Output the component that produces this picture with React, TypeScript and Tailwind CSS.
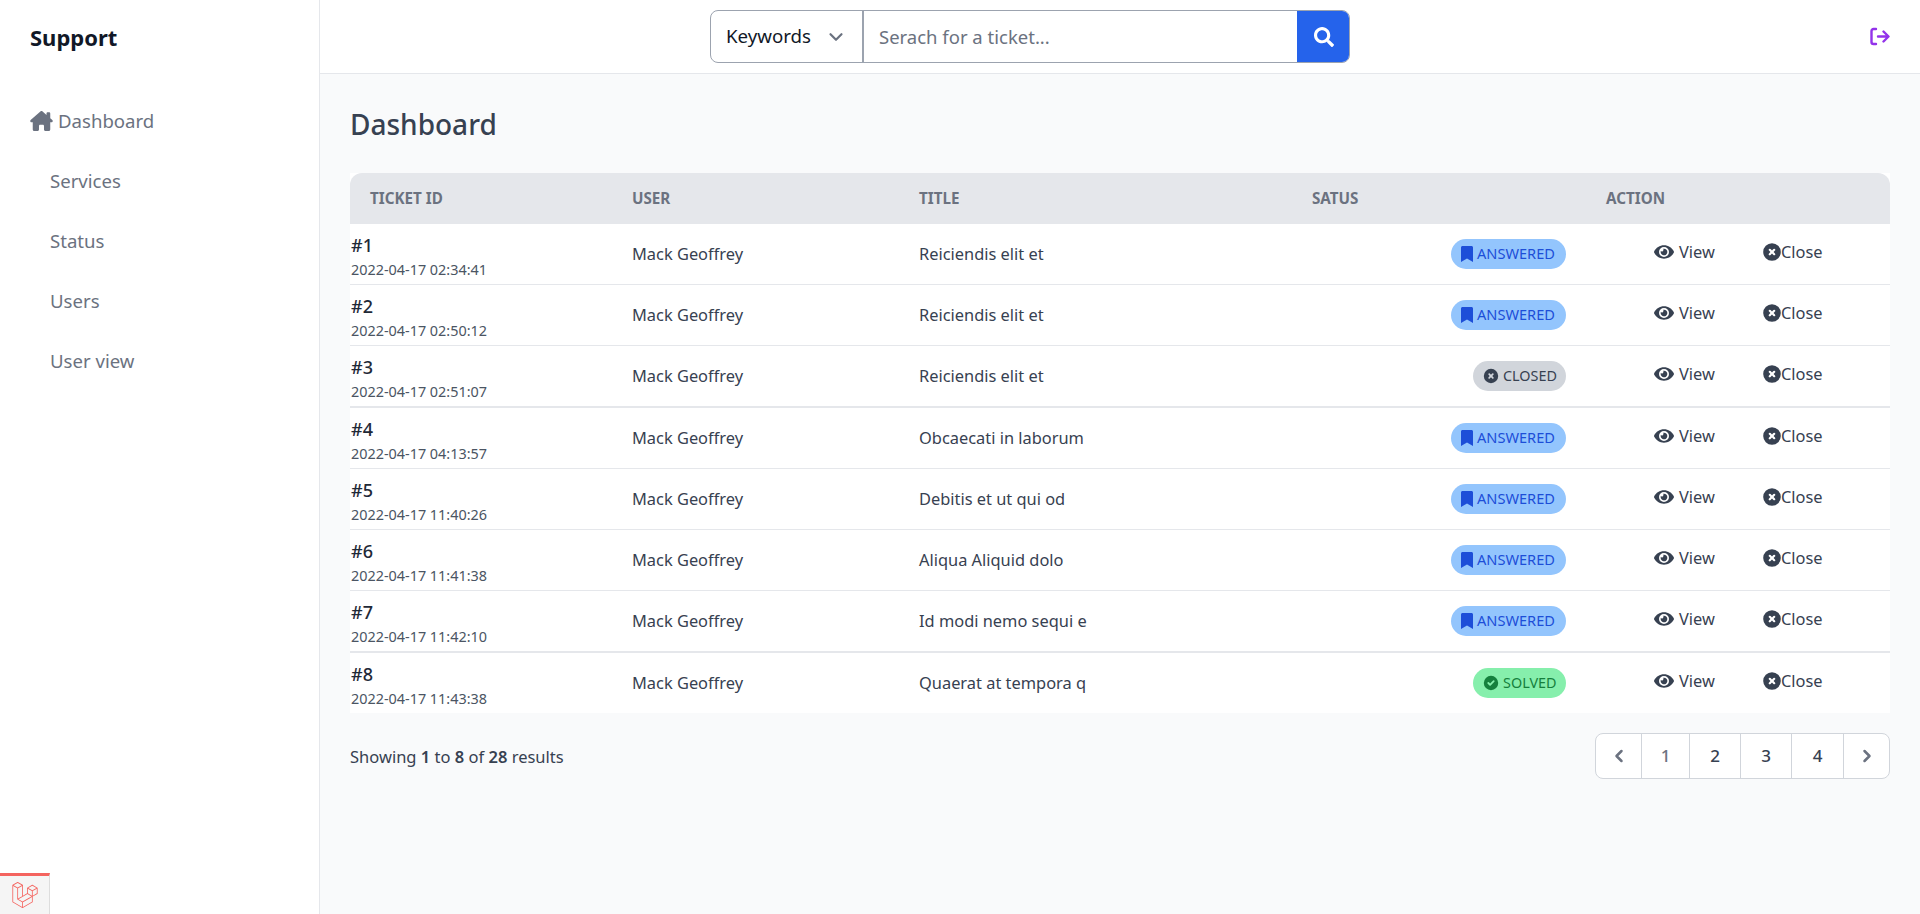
import React from "react";
import { FaEye, FaBookmark, FaSearch, FaLaravel } from "react-icons/fa";
import { FaHouseChimney } from "react-icons/fa6";
import { HiXCircle, HiCheckCircle } from "react-icons/hi";
import { ChevronDown, ChevronLeft, ChevronRight } from "lucide-react";

type Status = "answered" | "closed" | "solved";
const rows: { id: number; date: string; title: string; status: Status }[] = [
  { id: 1, date: "2022-04-17 02:34:41", title: "Reiciendis elit et", status: "answered" },
  { id: 2, date: "2022-04-17 02:50:12", title: "Reiciendis elit et", status: "answered" },
  { id: 3, date: "2022-04-17 02:51:07", title: "Reiciendis elit et", status: "closed" },
  { id: 4, date: "2022-04-17 04:13:57", title: "Obcaecati in laborum", status: "answered" },
  { id: 5, date: "2022-04-17 11:40:26", title: "Debitis et ut qui od", status: "answered" },
  { id: 6, date: "2022-04-17 11:41:38", title: "Aliqua Aliquid dolo", status: "answered" },
  { id: 7, date: "2022-04-17 11:42:10", title: "Id modi nemo sequi e", status: "answered" },
  { id: 8, date: "2022-04-17 11:43:38", title: "Quaerat at tempora q", status: "solved" },
];

function Badge({ status }: { status: Status }) {
  if (status === "answered")
    return (
      <span className="inline-flex h-[30px] w-[115px] items-center gap-[4px] rounded-full bg-[#93c5fd] pl-[10px] align-middle text-[14.6px] font-[450] text-[#1d4ed8]">
        <FaBookmark className="h-[16px] w-[12px]" />
        ANSWERED
      </span>
    );
  if (status === "closed")
    return (
      <span className="inline-flex h-[30px] w-[93px] items-center gap-[3px] rounded-full bg-[#d1d5db] pl-[9px] align-middle text-[14.4px] font-[450] text-[#374151]">
        <HiXCircle className="h-[18px] w-[18px]" />
        CLOSED
      </span>
    );
  return (
    <span className="inline-flex h-[30px] w-[93px] items-center gap-[3px] rounded-full bg-[#86efac] pl-[9px] align-middle text-[14.4px] font-[450] text-[#15803d]">
      <HiCheckCircle className="h-[18px] w-[18px]" />
      SOLVED
    </span>
  );
}

export default function App() {
  return (
    <div className="flex min-h-screen bg-[#f9fafb] font-['Noto_Sans',sans-serif] text-[#374151]">
      <aside className="relative w-[320px] shrink-0 border-r border-[#e5e7eb] bg-white">
        <div className="flex h-[75px] items-center pl-[30px] text-[22px] font-bold text-[#111827]">Support</div>
        <nav className="mt-[16px] flex flex-col text-[18.6px] text-[#6b7280]">
          <a className="flex h-[60px] items-center gap-[5px] pl-[30px]">
            <FaHouseChimney className="h-[20px] w-[23px]" />
            Dashboard
          </a>
          {["Services", "Status", "Users", "User view"].map((n) => (
            <a key={n} className="flex h-[60px] items-center pl-[50px]">
              {n}
            </a>
          ))}
        </nav>
        <div className="absolute bottom-0 left-0 flex h-[41px] w-[50px] items-center justify-center border-t-[3px] border-r border-t-[#f4645f] border-r-[#ddd] bg-[#f5f5f5]">
          <FaLaravel className="h-[26px] w-[26px] text-[#f4645f]" />
        </div>
      </aside>
      <div className="min-w-0 flex-1">
        <header className="relative flex h-[74px] items-center border-b border-[#e5e7eb] bg-white pl-[390px]">
          <div className="flex h-[53px] w-[640px] overflow-hidden rounded-lg border border-[#9ca3af]">
            <div className="flex w-[153px] items-center border-r-2 border-[#9ca3af] pl-[15px] text-[18.7px] text-[#111827]">
              Keywords
              <ChevronDown className="ml-[14px] h-[22px] w-[22px] text-[#6b7280]" strokeWidth={2.4} />
            </div>
            <div className="flex flex-1 items-center pl-[15px] text-[18.5px] text-[#6b7280]">Serach for a ticket...</div>
            <div className="-my-px -mr-px flex w-[53px] items-center justify-center bg-[#2563eb] text-white">
              <FaSearch className="h-[20px] w-[20px]" />
            </div>
          </div>
          <svg className="absolute right-[30px] top-[27px] h-[19px] w-[20px]" viewBox="0 0 20 19" fill="none" stroke="#9333ea" strokeWidth="2.4" strokeLinecap="round" strokeLinejoin="round">
            <path d="M6 2H3.5a2 2 0 0 0-2 2v11a2 2 0 0 0 2 2H6" />
            <path d="M8 9.5h10M13.5 4.5l5 5-5 5" />
          </svg>
        </header>
        <main className="px-[30px]">
          <h1 className="flex h-[99px] items-center pt-[1px] text-[28px] font-medium text-[#374151]">Dashboard</h1>
          <table className="w-full table-fixed border-separate border-spacing-0 bg-white">
            <thead>
              <tr className="h-[51px] text-left text-[15.2px] text-[#6b7280]">
                <th className="w-[262px] rounded-tl-xl bg-[#e5e7eb] pl-[20px] font-bold">TICKET ID</th>
                <th className="w-[287px] bg-[#e5e7eb] pl-[20px] font-bold">USER</th>
                <th className="w-[393px] bg-[#e5e7eb] pl-[20px] font-bold">TITLE</th>
                <th className="w-[294px] bg-[#e5e7eb] pl-[20px] font-bold">SATUS</th>
                <th className="rounded-tr-xl bg-[#e5e7eb] pl-[20px] font-bold">ACTION</th>
              </tr>
            </thead>
            <tbody>
              {rows.map((r, i) => {
                const cell = i === 7 ? "" : i === 2 || i === 6 ? "border-b-2 border-[#e5e7eb]" : "border-b border-[#e5e7eb]";
                return (
                  <tr key={r.id} className={i === 7 ? "h-[60px]" : i === 2 || i === 6 ? "h-[62px]" : "h-[61px]"}>
                    <td className={`pl-[1px] pt-[4px] ${cell}`}>
                      <div className="text-[18px] font-medium leading-[24px] text-[#1f2937]">#{r.id}</div>
                      <div className="pt-[3px] text-[14.4px] leading-[20px] text-[#4b5563]">{r.date}</div>
                    </td>
                    <td className={`pl-[20px] pt-[1px] text-[16.4px] ${cell}`}>Mack Geoffrey</td>
                    <td className={`pl-[20px] pt-[1px] text-[16.4px] ${cell}`}>{r.title}</td>
                    <td className={`pr-[20px] text-right ${cell}`}>
                      <Badge status={r.status} />
                    </td>
                    <td className={`pl-[68px] text-[16.4px] ${cell}`}>
                      <div className="flex items-center pb-[4px]">
                        <FaEye className="h-[20px] w-[20px]" />
                        <span className="ml-[5px] w-[84px]">View</span>
                        <HiXCircle className="-ml-[2px] h-[22px] w-[22px]" />
                        <span className="-ml-[2px]">Close</span>
                      </div>
                    </td>
                  </tr>
                );
              })}
            </tbody>
          </table>
          <div className="mt-[20px] flex items-center justify-between">
            <p className="pt-[2px] text-[16.5px] text-[#374151]">
              Showing <span className="font-semibold">1</span> to <span className="font-semibold">8</span> of <span className="font-semibold">28</span> results
            </p>
            <div className="flex h-[46px] w-[295px] overflow-hidden rounded-lg border border-[#d1d5db] bg-white text-[17px] font-medium">
              <span className="flex w-[46px] items-center justify-center border-r border-[#d1d5db] text-[#6b7280]"><ChevronLeft className="h-[20px] w-[20px]" strokeWidth={3} /></span>
              <span className="flex w-[48px] items-center justify-center border-r border-[#d1d5db] text-[#6b7280]">1</span>
              <span className="flex w-[51px] items-center justify-center border-r border-[#d1d5db]">2</span>
              <span className="flex w-[51px] items-center justify-center border-r border-[#d1d5db]">3</span>
              <span className="flex w-[52px] items-center justify-center border-r border-[#d1d5db]">4</span>
              <span className="flex flex-1 items-center justify-center text-[#6b7280]"><ChevronRight className="h-[20px] w-[20px]" strokeWidth={3} /></span>
            </div>
          </div>
        </main>
      </div>
    </div>
  );
}
